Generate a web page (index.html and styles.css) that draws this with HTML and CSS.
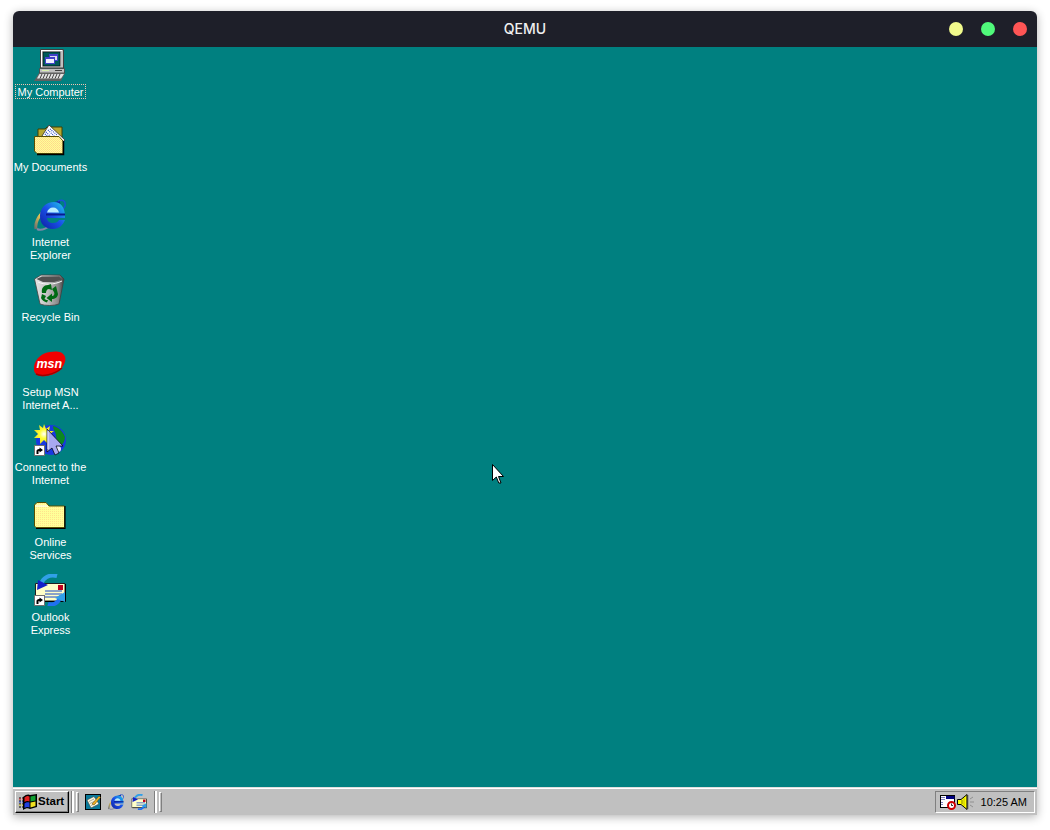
FILE: index.html
```html
<!DOCTYPE html>
<html lang="en">
<head>
<meta charset="utf-8">
<title>QEMU</title>
<link rel="stylesheet" href="styles.css">
</head>
<body>
<svg class="defs" width="0" height="0" aria-hidden="true">
  <defs>
    <pattern id="dither" width="2" height="2" patternUnits="userSpaceOnUse">
      <rect width="2" height="2" fill="#ffff99"/>
      <rect width="1" height="1" fill="#ffe08c"/>
      <rect x="1" y="1" width="1" height="1" fill="#ffd68c"/>
    </pattern>
    <pattern id="dither2" width="2" height="2" patternUnits="userSpaceOnUse">
      <rect width="2" height="2" fill="#ffff99"/>
      <rect width="1" height="1" fill="#ffe38c"/>
    </pattern>
    <linearGradient id="ieblue" x1="0" y1="1" x2="1" y2="0">
      <stop offset="0" stop-color="#0c1f9c"/>
      <stop offset=".5" stop-color="#1a4ee8"/>
      <stop offset=".8" stop-color="#1c9ae8"/>
      <stop offset="1" stop-color="#30d0f0"/>
    </linearGradient>
    <linearGradient id="swoosh" x1="0" y1="1" x2="1" y2="0">
      <stop offset="0" stop-color="#707070"/>
      <stop offset=".35" stop-color="#e8c850"/>
      <stop offset=".6" stop-color="#2850e0"/>
      <stop offset="1" stop-color="#1020a0"/>
    </linearGradient>
    <linearGradient id="binside" x1="0" y1="0" x2="1" y2="0">
      <stop offset="0" stop-color="#e8e8e8"/>
      <stop offset=".45" stop-color="#c0c0c0"/>
      <stop offset=".8" stop-color="#888888"/>
      <stop offset="1" stop-color="#404040"/>
    </linearGradient>
    <radialGradient id="burst">
      <stop offset="0" stop-color="#ffffff"/>
      <stop offset=".45" stop-color="#ffff33"/>
      <stop offset="1" stop-color="#e8e020"/>
    </radialGradient>
    <symbol id="ie" viewBox="0 0 32 32">
      <path d="M2 30C0 20 12 6 26 3" fill="none" stroke="url(#swoosh)" stroke-width="3"/>
      <path d="M3 30C7 32 13 29 17 26" fill="none" stroke="#8088a8" stroke-width="2"/>
      <path d="M24 2C29 0 32 2 31 7L28 12" fill="none" stroke="#1c50d8" stroke-width="1.500"/>
      <path d="M6 17C6 9 12 3 20 3C27 3 31 9 31 17V19H13C13 22 16 24 19 24C22 24 24 23 25 21H31C29 26 25 30 19 30C11 30 6 25 6 17Z" fill="url(#ieblue)"/>
      <path d="M13 13.500C13.500 10.500 16 8.500 19 8.500C22 8.500 24.500 10.500 25 13.500Z" fill="#b8ecff"/>
      <rect x="12" y="14.500" width="19" height="2" fill="#0a1a90"/>
    </symbol>
    <symbol id="oe" viewBox="0 0 32 32">
      <path d="M1.500 9.500H31V27H1.500Z" fill="#ffffc8" stroke="#202020"/>
      <path d="M31.500 10V27.500H3" fill="none" stroke="#000"/>
      <rect x="24" y="11" width="5" height="5" fill="#c00020"/>
      <path d="M11 17H28M11 20H28M11 23H24" stroke="#1848c8" fill="none"/>
      <path d="M7 10C9 4 15 0 23 2" fill="none" stroke="#30a0e8" stroke-width="4"/>
      <path d="M3 16L4 6L14 11Z" fill="#1420c8"/>
      <path d="M14 30C20 32 25 28 27 22" fill="none" stroke="#2070f0" stroke-width="4"/>
      <path d="M21 24L31 18L31 28Z" fill="#30a0e8"/>
    </symbol>
    <symbol id="shortcut" viewBox="0 0 11 11">
      <rect x=".5" y=".5" width="10" height="10" fill="#fff" stroke="#707070"/>
      <path d="M2.500 9V6C2.500 5 3.500 4 5 4H5.500V2.500L9 5L5.500 7.500V6H5C4.500 6 4.500 6.500 4.500 7V9Z" fill="#000"/>
    </symbol>
  </defs>
</svg>

<main class="window">
  <header class="titlebar">
    <h1 class="title">QEMU</h1>
    <div class="controls">
      <span class="dot dot-min"></span>
      <span class="dot dot-max"></span>
      <span class="dot dot-close"></span>
    </div>
  </header>

  <section class="desktop">
    <ul class="icons">
      <li class="item">
        <svg class="icon" viewBox="0 0 32 32">
          <path d="M6.500 0.500H29.500V19H6.500Z" fill="#c0c0c0" stroke="#404040"/>
          <path d="M7 1H28V2H8V18H7Z" fill="#fff"/>
          <rect x="9" y="3" width="17" height="14" fill="#005858" stroke="#000" stroke-width=".6"/>
          <rect x="15" y="5" width="9" height="7" fill="#4040c8"/>
          <rect x="16" y="7" width="7" height="4" fill="#d8d8f0"/>
          <rect x="11" y="8" width="10" height="7" fill="#4040c8"/>
          <rect x="12" y="10" width="8" height="4" fill="#f0f0ff"/>
          <path d="M5.500 19.500H30.500V24H5.500Z" fill="#c0c0c0" stroke="#404040" stroke-width=".8"/>
          <path d="M8 21.500H15" stroke="#d8f0b0"/>
          <path d="M21 21.500H28" stroke="#404040"/>
          <path d="M5 24H31L27 32H0Z" fill="#606060"/>
          <path d="M5.500 25H30L27 29.500H3Z" fill="#e4e4e4"/>
          <path d="M8 25L6 29.500M11 25L9 29.500M14 25L12 29.500M17 25L15 29.500M20 25L18 29.500M23 25L21 29.500M26 25L24 29.500" stroke="#404040"/>
        </svg>
        <span class="label label-focus">My Computer</span>
      </li>
      <li class="item">
        <svg class="icon" viewBox="0 0 32 32">
          <path d="M4 5H11L13 3H28V20H4Z" fill="#b8a830" stroke="#404000"/>
          <path d="M8 12L15 1L31 16L24 22Z" fill="#fff" stroke="#303030" stroke-width=".8"/>
          <path d="M14 6L21 13M12 8L19 15M11 10L17 16M16 5L23 11" stroke="#2a4ac0" stroke-width="1.200" stroke-dasharray="1 1" fill="none"/>
          <path d="M0.500 12.500H25L29 17V29.500H3L0.500 27Z" fill="url(#dither)" stroke="#585000"/>
          <path d="M29.500 17V30.500H3" fill="none" stroke="#000" stroke-width="1.500"/>
        </svg>
        <span class="label">My Documents</span>
      </li>
      <li class="item">
        <svg class="icon"><use href="#ie"/></svg>
        <span class="label">Internet<br>Explorer</span>
      </li>
      <li class="item">
        <svg class="icon" viewBox="0 0 32 32">
          <path d="M0.500 5L7 1H26L30 5L25 30C20 32 11 32 6 30Z" fill="url(#binside)" stroke="#404040" stroke-width=".8"/>
          <path d="M2.500 5L8 2.500H25L28 5.500L20 8H9Z" fill="#505050"/>
          <path d="M4 8C10 11 20 11 28 7" fill="none" stroke="#f8f8f8"/>
          <path d="M8 19C7 14 10 11 14 11L17 10L18 16L15 15C13 15 12 17 12 19Z" fill="#006a14"/>
          <path d="M22 12L24 20C24 23 21 25 18 25V28L12.500 24L18 19.500V22C20 22 21 20 20 18L18 15Z" fill="#006a14"/>
          <path d="M8 20L12 22L10.500 25C12 26 13 26 14 26L13 28.500C10 28 8 26 7 24Z" fill="#006a14"/>
        </svg>
        <span class="label">Recycle Bin</span>
      </li>
      <li class="item">
        <svg class="icon" viewBox="0 0 32 32">
          <path d="M0 17C2 9 8 4 16 3C21 2 28 2 30 6C33 10 31 16 26 21C21 26 12 28 6 27C1 26 -1 22 0 17Z" fill="#f00000"/>
          <path d="M2 25C8 28 20 26 28 19" fill="none" stroke="#a00000" stroke-width="1.500"/>
          <text class="msn" x="2.500" y="19">msn</text>
        </svg>
        <span class="label">Setup MSN<br>Internet A...</span>
      </li>
      <li class="item">
        <svg class="icon" viewBox="0 0 32 32">
          <circle cx="17" cy="16" r="15" fill="#1838e0"/>
          <path d="M19 2C24 3 29 7 31 13C31 17 29 20 27 21C24 18 22 16 22 12C22 8 19 6 19 2Z" fill="#0c8820"/>
          <circle cx="24" cy="25" r="3" fill="#e8e8ff"/>
          <path d="M10 0L12 5L16 2L15 7L20 7L16 10L20 14L14 14L14 20L10 16L6 20L6 14L0 14L4 10L0 6L6 6L5 1L9 4Z" fill="url(#burst)"/>
          <path d="M13 5L29 22L22 22L25 29L21 31L18 24L13 28Z" fill="#a8a8f0" stroke="#000" stroke-width=".7"/>
          <path d="M14 7V25" stroke="#e8e8ff"/>
          <use href="#shortcut" x="0" y="21" width="11" height="11"/>
        </svg>
        <span class="label">Connect to the<br>Internet</span>
      </li>
      <li class="item">
        <svg class="icon" viewBox="0 0 32 32">
          <path d="M0.500 6V27L2 28.500H30.500V7H15L12 3.500H3Z" fill="url(#dither2)" stroke="#585000"/>
          <path d="M31 7V29.500H2" fill="none" stroke="#000" stroke-width="1.200"/>
          <path d="M1 7H14" stroke="#fff"/>
        </svg>
        <span class="label">Online<br>Services</span>
      </li>
      <li class="item">
        <svg class="icon">
          <use href="#oe"/>
          <use href="#shortcut" x="0" y="21" width="11" height="11"/>
        </svg>
        <span class="label">Outlook<br>Express</span>
      </li>
    </ul>
    <svg class="cursor" viewBox="0 0 12 20">
      <path d="M0.500 0.500V16.500L4.300 13L6.800 19H9L6.500 12.500H11.500Z" fill="#fff" stroke="#000"/>
    </svg>
  </section>

  <footer class="taskbar">
    <button class="start" type="button">
      <svg class="flag" viewBox="0 0 18 16">
        <path d="M0 4H5M0 7H5M0 10H5M0 13H5" stroke-dasharray="2 1" stroke="#000"/>
        <path d="M0 5H6" stroke="#e02020" stroke-dasharray="2 1"/>
        <path d="M0 8H6" stroke="#2040e0" stroke-dasharray="2 1"/>
        <path d="M0 11H6" stroke="#e0d020" stroke-dasharray="2 1"/>
        <path d="M4 3C7 0 10 0 11 1L18 0V13L11 15C9 14 7 14 4 16Z" fill="#000"/>
        <path d="M5.500 3.500C7 2 9 1.500 10.500 2.500V7.500C9 6.500 7 7 5.500 8Z" fill="#e02020"/>
        <path d="M11.500 2.500L16.500 1.500V6.500L11.500 7.500Z" fill="#10a030"/>
        <path d="M5.500 9.500C7 8 9 8 10.500 8.500V13.500C9 12.500 7 13 5.500 14Z" fill="#2040e0"/>
        <path d="M11.500 8.500L16.500 7.500V12L11.500 13.500Z" fill="#f0e020"/>
      </svg>
      <span class="start-text">Start</span>
    </button>
    <span class="divider"></span>
    <span class="handle"></span>
    <div class="quick">
      <svg class="qicon" viewBox="0 0 16 16">
        <rect x=".5" y=".5" width="15" height="15" fill="#0a7a9a" stroke="#000"/>
        <path d="M2 6L9 2.500L14 10L6 14Z" fill="#fffce0" stroke="#404040" stroke-width=".6"/>
        <path d="M4 7.500L9 5M5 9.500L10 7M6 11.500L11 9" stroke="#808080" stroke-width=".7"/>
        <path d="M7 10L14 2L15.500 3.500L9 11Z" fill="#f0b020" stroke="#604000" stroke-width=".5"/>
      </svg>
      <svg class="qicon"><use href="#ie"/></svg>
      <svg class="qicon"><use href="#oe"/></svg>
    </div>
    <span class="divider divider-2"></span>
    <span class="handle"></span>
    <div class="tray">
      <svg class="tray-sched" viewBox="0 0 16 16">
        <rect x=".5" y="1.500" width="14" height="12" fill="#fff" stroke="#000"/>
        <rect x="6" y="2" width="8.500" height="3" fill="#000080"/>
        <path d="M2 3V7M4 3V7M2 8V12" stroke="#000080" stroke-dasharray="1 1"/>
        <circle cx="11.500" cy="11.500" r="3.500" fill="#fff" stroke="#d00000" stroke-width="2"/>
        <path d="M11.500 9.500V11.500H13" stroke="#000" fill="none" stroke-width=".8"/>
      </svg>
      <svg class="tray-vol" viewBox="0 0 18 16">
        <path d="M0.500 5.500H4L10 0.500V15.500L4 10.500H0.500Z" fill="#ffff00" stroke="#000"/>
        <path d="M5 6V10" stroke="#808000"/>
        <path d="M7 4V12" stroke="#c0c000"/>
        <path d="M10.500 1V15" stroke="#404040" stroke-width="1.500"/>
        <path d="M13 5L16 3M13 8H17M13 11L16 13" stroke="#909090"/>
      </svg>
      <time class="clock">10:25 AM</time>
    </div>
  </footer>
</main>
</body>
</html>
```

FILE: styles.css
```css
* {
  box-sizing: border-box;
}

html,
body {
  margin: 0;
  background: #fff;
}

body {
  height: 830px;
  padding: 11px 13px 15px;
  overflow: hidden;
  font-family: "Liberation Sans", Arial, sans-serif;
}

.defs {
  display: block;
  height: 0;
}

.window {
  display: flex;
  flex-direction: column;
  height: 804px;
  border-radius: 6px 6px 0 0;
  box-shadow: 0 2px 10px rgba(0, 0, 0, 0.3);
  overflow: hidden;
}

.titlebar {
  position: relative;
  display: flex;
  align-items: center;
  justify-content: center;
  flex: 0 0 36px;
  background: #1e1f29;
}

.title {
  margin: 0;
  font: 500 14px/1 Inter, sans-serif;
  color: #f0f0f0;
}

.controls {
  position: absolute;
  top: 11px;
  right: 10px;
  display: flex;
  gap: 18px;
}

.dot {
  width: 14px;
  height: 14px;
  border-radius: 50%;
}

.dot-min { background: #f1fa8c; }
.dot-max { background: #50fa7b; }
.dot-close { background: #ff5555; }

.desktop {
  position: relative;
  flex: 1;
  background: #008080;
}

.icons {
  display: flex;
  flex-direction: column;
  width: 75px;
  margin: 0;
  padding: 0;
  list-style: none;
}

.item {
  display: flex;
  flex-direction: column;
  align-items: center;
  height: 75px;
  padding-top: 2px;
  gap: 5px;
}

.icon {
  display: block;
  width: 32px;
  height: 32px;
  flex: none;
  margin-left: -1px;
}

.label {
  font-size: 11px;
  line-height: 13px;
  color: #fff;
  text-align: center;
  white-space: nowrap;
}

.label-focus {
  margin-top: -2px;
  padding: 2px 2px 0;
  outline: 1px dotted #f4c4b0;
  outline-offset: -1px;
}

.msn {
  font: italic bold 12.5px "Liberation Sans", sans-serif;
  fill: #fff;
}

.cursor {
  position: absolute;
  left: 479px;
  top: 417px;
  width: 12px;
  height: 20px;
}

.taskbar {
  display: flex;
  align-items: stretch;
  flex: 0 0 28px;
  padding: 3px 2px 2px;
  background: #c0c0c0;
  border-top: 1px solid #dfdfdf;
  box-shadow: inset 0 1px 0 #fff;
}

.start {
  display: flex;
  align-items: center;
  gap: 1px;
  width: 54px;
  height: 22px;
  padding: 0 0 0 3px;
  background: #c0c0c0;
  border: 1px solid;
  border-color: #fff #000 #000 #fff;
  box-shadow: inset -1px -1px 0 #808080;
  cursor: default;
}

.flag {
  flex: none;
  width: 18px;
  height: 16px;
}

.start-text {
  font: bold 11.5px/1 "Liberation Sans", sans-serif;
  color: #000;
}

.divider {
  flex: none;
  width: 2px;
  margin: 0 2px 0 3px;
  background: #fff;
  box-shadow: -1px 0 0 #808080;
}

.divider-2 {
  margin-left: 8px;
}

.handle {
  flex: none;
  width: 3px;
  margin: 1px 0;
  background: #c0c0c0;
  border: 1px solid;
  border-color: #fff #808080 #808080 #fff;
}

.quick {
  display: flex;
  align-items: center;
  gap: 7px;
  margin-left: 6px;
}

.qicon {
  display: block;
  width: 16px;
  height: 16px;
}

.tray {
  display: flex;
  align-items: center;
  width: 100px;
  margin-left: auto;
  padding: 0 7px 0 4px;
  border: 1px solid;
  border-color: #808080 #fff #fff #808080;
}

.tray-sched {
  flex: none;
  width: 16px;
  height: 16px;
}

.tray-vol {
  flex: none;
  width: 18px;
  height: 16px;
  margin-left: 1px;
}

.clock {
  margin-left: auto;
  font-size: 11px;
  color: #000;
  white-space: nowrap;
}
```
